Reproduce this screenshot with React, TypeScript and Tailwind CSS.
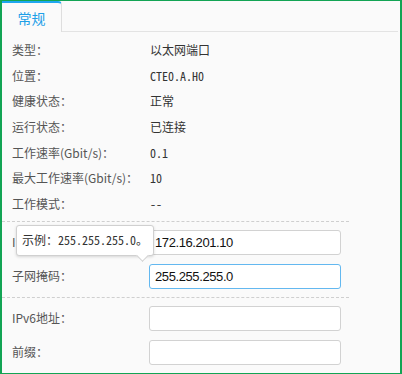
const infoRows = [
  { label: "类型：", value: "以太网端口" },
  { label: "位置：", value: "CTE0.A.H0" },
  { label: "健康状态：", value: "正常" },
  { label: "运行状态：", value: "已连接" },
  { label: "工作速率(Gbit/s)：", value: "0.1" },
  { label: "最大工作速率(Gbit/s)：", value: "10" },
  { label: "工作模式：", value: "--" },
];

const Field = ({ value = "", focused = false }: { value?: string; focused?: boolean }) => (
  <input
    readOnly
    value={value}
    className={`h-[25px] w-[192px] rounded-[3px] border bg-white px-[5px] font-['Liberation_Sans',sans-serif] text-[13px] tracking-[-0.4px] text-[#111] outline-none ${
      focused ? "border-[#63b8f0]" : "border-[#d2d2d2]"
    }`}
  />
);

const FieldRow = ({ label, children }: { label: string; children: React.ReactNode }) => (
  <div className="relative flex h-[25px] items-center">
    <span className="w-[147px] shrink-0 pl-[10px] text-[#555]">{label}</span>
    {children}
  </div>
);

export default function App() {
  return (
    <div className="h-[374px] w-[402px] border-y border-l-2 border-r-2 border-[#12a454] bg-[#fafafa] font-['Noto_Sans_CJK_SC',sans-serif] text-[12px]">
      <div className="mr-[2px] flex h-[31px] border-b border-[#e3e3e3]">
        <div className="-mb-px flex w-[60px] items-center justify-center rounded-tr-[4px] border-t-2 border-r border-[#1ea7ef] border-r-[#dedede] bg-[#fafafa] pt-[2px] text-[14px] text-[#1d9fe8]">
          常规
        </div>
      </div>

      <div className="w-[347px] pt-[5px]">
        {infoRows.map((row) => (
          <div key={row.label} className="flex h-[25.7px] items-center">
            <span className="w-[148px] shrink-0 pl-[10px] text-[#555]">{row.label}</span>
            <span className="font-['Noto_Sans_Mono_CJK_SC','Noto_Sans_CJK_SC',monospace] text-[#333]">
              {row.value}
            </span>
          </div>
        ))}

        <div className="mt-[4px] border-t border-dashed border-[#cfcfcf]" />

        <div className="flex flex-col gap-[9px] py-[8px]">
          <FieldRow label="IPv4地址：">
            <Field value="172.16.201.10" />
            <div className="absolute left-[14px] top-[-5px] z-10 flex h-[31px] w-[138px] items-center rounded-[3px] border border-[#d0d0d0] bg-white pl-[5px] font-['Noto_Sans_Mono_CJK_SC','Noto_Sans_CJK_SC',monospace] text-[#333] shadow-[0_1px_3px_rgba(0,0,0,0.15)]">
              示例：255.255.255.0。
              <span className="absolute bottom-[-5px] left-[121px] h-[9px] w-[9px] rotate-45 border-b border-r border-[#d0d0d0] bg-white" />
            </div>
          </FieldRow>
          <FieldRow label="子网掩码：">
            <Field value="255.255.255.0" focused />
          </FieldRow>
        </div>

        <div className="border-t border-dashed border-[#cfcfcf]" />

        <div className="flex flex-col gap-[9px] pt-[8px]">
          <FieldRow label="IPv6地址：">
            <Field />
          </FieldRow>
          <FieldRow label="前缀：">
            <Field />
          </FieldRow>
        </div>
      </div>
    </div>
  );
}
